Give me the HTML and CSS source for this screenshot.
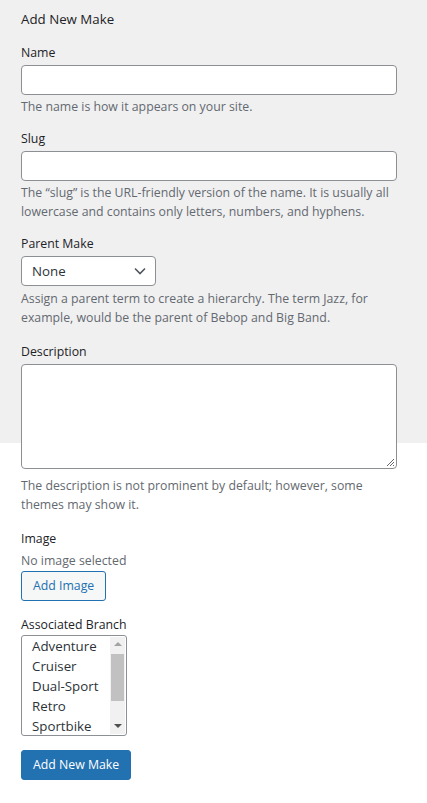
FILE: index.html
```html
<!DOCTYPE html>
<html lang="en">
<head>
<meta charset="utf-8">
<title>Add New Make</title>
<link rel="stylesheet" href="styles.css">
</head>
<body>
<form class="form">
  <h2 class="title">Add New Make</h2>

  <div class="field">
    <label class="label" for="tag-name">Name</label>
    <input class="input" id="tag-name" type="text">
    <p class="help">The name is how it appears on your site.</p>
  </div>

  <div class="field">
    <label class="label" for="tag-slug">Slug</label>
    <input class="input" id="tag-slug" type="text">
    <p class="help">The “slug” is the URL-friendly version of the name. It is usually all lowercase and contains only letters, numbers, and hyphens.</p>
  </div>

  <div class="field field-parent">
    <label class="label" for="parent">Parent Make</label>
    <div class="select">
      <span class="select-value">None</span>
      <svg class="chev" width="12" height="8" viewBox="0 0 12 8"><path d="M1 1.5l5 5 5-5" fill="none" stroke="#50575e" stroke-width="1.6"/></svg>
    </div>
    <p class="help">Assign a parent term to create a hierarchy. The term Jazz, for example, would be the parent of Bebop and Big Band.</p>
  </div>

  <div class="field field-desc">
    <label class="label" for="tag-description">Description</label>
    <div class="textarea">
      <svg class="grip" width="10" height="10" viewBox="0 0 10 10"><path d="M9 2L2 9M9 5L5 9M9 8L8 9" stroke="#646970" stroke-width="1" fill="none"/></svg>
    </div>
    <p class="help">The description is not prominent by default; however, some themes may show it.</p>
  </div>

  <div class="field field-image">
    <div class="label">Image</div>
    <div class="noimg">No image selected</div>
    <button type="button" class="btn-secondary">Add Image</button>
  </div>

  <div class="field">
    <div class="label label-tight">Associated Branch</div>
    <div class="listbox">
      <div class="options">
        <div class="opt">Adventure</div>
        <div class="opt">Cruiser</div>
        <div class="opt">Dual-Sport</div>
        <div class="opt">Retro</div>
        <div class="opt">Sportbike</div>
      </div>
      <div class="scrollbar">
        <div class="arrow up"></div>
        <div class="track"><div class="thumb"></div></div>
        <div class="arrow down"></div>
      </div>
    </div>
  </div>

  <button type="button" class="btn-primary">Add New Make</button>
</form>
</body>
</html>
```

FILE: styles.css
```css
html, body {
  margin: 0;
  padding: 0;
}
body {
  background: linear-gradient(#f0f0f0 0, #f0f0f0 443px, #fff 443px);
  min-height: 803px;
  font-family: "Open Sans", "Noto Sans", sans-serif;
  font-size: 12.3px;
  line-height: 20px;
  color: #1d2327;
}
.form {
  width: 376px;
  padding: 9px 30px 20px 21px;
}
.title {
  margin: 0 0 14px;
  font-size: 13.3px;
  font-weight: 400;
  line-height: 20px;
  color: #1d2327;
}
.field {
  margin-bottom: 12px;
}
.field-parent {
  margin-bottom: 14px;
}
.field-desc {
  margin-bottom: 14px;
}
.field-image {
  margin-bottom: 14px;
}
.label {
  display: block;
  line-height: 20px;
  margin-bottom: 2px;
}
.label-tight {
  margin-bottom: 0;
}
.input {
  display: block;
  box-sizing: border-box;
  width: 376px;
  height: 30px;
  margin: 0;
  padding: 0 8px;
  border: 1px solid #8c8f94;
  border-radius: 4px;
  background: #fff;
  font: inherit;
}
.help {
  margin: 2px 0 0;
  line-height: 19.5px;
  color: #646970;
}
.select {
  box-sizing: border-box;
  width: 135px;
  height: 30px;
  display: flex;
  align-items: center;
  justify-content: space-between;
  padding: 0 9px 0 10px;
  border: 1px solid #8c8f94;
  border-radius: 4px;
  background: #fff;
  font-size: 13.3px;
  color: #2c3338;
  margin-bottom: 3px;
}
.chev { display: block; }
.textarea {
  box-sizing: border-box;
  width: 376px;
  height: 105px;
  border: 1px solid #8c8f94;
  border-radius: 4px;
  background: #fff;
  display: flex;
  align-items: flex-end;
  justify-content: flex-end;
  padding: 1px;
  margin-bottom: 7px;
}
.grip { display: block; }
.noimg {
  line-height: 20px;
  color: #646970;
}
.btn-secondary, .btn-primary {
  display: block;
  box-sizing: border-box;
  height: 30px;
  margin: 0;
  padding: 0 10px;
  border-radius: 3px;
  font: inherit;
  font-size: 12.3px;
  white-space: nowrap;
  cursor: pointer;
}
.btn-secondary {
  padding: 0 11px;
  border: 1px solid #2271b1;
  background: #f6f7f7;
  color: #2271b1;
}
.btn-primary {
  margin-top: 14px;
  padding: 0 11px;
  border: 1px solid #2271b1;
  background: #2271b1;
  color: #fff;
}
.listbox {
  box-sizing: border-box;
  width: 106px;
  height: 101px;
  display: flex;
  border: 1px solid #8c8f94;
  border-radius: 3px;
  background: #fff;
  overflow: hidden;
}
.options {
  flex: 1;
  padding: 0 0 0 10px;
  font-size: 13.3px;
  color: #2c3338;
}
.opt {
  line-height: 20px;
}
.scrollbar {
  width: 15px;
  margin: 1px 1px 1px 0;
  background: #f1f1f1;
  display: flex;
  flex-direction: column;
}
.arrow {
  height: 15px;
  display: flex;
  align-items: center;
  justify-content: center;
}
.arrow::before {
  content: "";
  width: 0;
  height: 0;
  border-left: 4px solid transparent;
  border-right: 4px solid transparent;
}
.arrow.up::before { border-bottom: 4px solid #a3a3a3; }
.arrow.down::before { border-top: 4px solid #505050; }
.track {
  flex: 1;
  padding: 2px 1px;
}
.thumb {
  height: 47px;
  background: #c1c1c1;
}
```
